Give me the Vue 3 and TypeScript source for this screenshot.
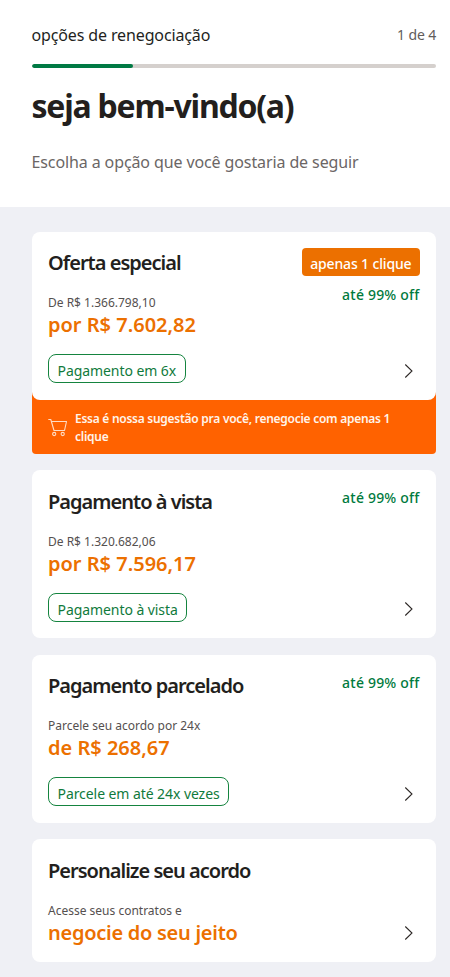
<script setup lang="ts">
interface Offer {
  id: string
  title: string
  caption: string
  price: string
  pill?: string
  badge?: string
  discount?: string
  tip?: string
}

const step = 1
const totalSteps = 4

const offers: Offer[] = [
  {
    id: 'special',
    title: 'Oferta especial',
    caption: 'De R$ 1.366.798,10',
    price: 'por R$ 7.602,82',
    pill: 'Pagamento em 6x',
    badge: 'apenas 1 clique',
    discount: 'até 99% off',
    tip: 'Essa é nossa sugestão pra você, renegocie com apenas 1 clique',
  },
  {
    id: 'cash',
    title: 'Pagamento à vista',
    caption: 'De R$ 1.320.682,06',
    price: 'por R$ 7.596,17',
    pill: 'Pagamento à vista',
    discount: 'até 99% off',
  },
  {
    id: 'installments',
    title: 'Pagamento parcelado',
    caption: 'Parcele seu acordo por 24x',
    price: 'de R$ 268,67',
    pill: 'Parcele em até 24x vezes',
    discount: 'até 99% off',
  },
  {
    id: 'custom',
    title: 'Personalize seu acordo',
    caption: 'Acesse seus contratos e',
    price: 'negocie do seu jeito',
  },
]
</script>

<template>
  <div class="page">
    <header class="header">
      <div class="steps">
        <span class="steps-name">opções de renegociação</span>
        <span class="steps-count">{{ step }} de {{ totalSteps }}</span>
      </div>
      <div class="progress">
        <div class="progress-fill" :style="{ width: (step / totalSteps) * 100 + '%' }"></div>
      </div>
      <h1 class="title">seja bem-vindo(a)</h1>
      <p class="subtitle">Escolha a opção que você gostaria de seguir</p>
    </header>

    <main class="offers">
      <section v-for="offer in offers" :key="offer.id" class="offer" :class="{ tipped: offer.tip }">
        <div class="card">
          <div class="info">
            <h2 class="card-title">{{ offer.title }}</h2>
            <p class="caption">{{ offer.caption }}</p>
            <p class="price" :class="{ words: !offer.pill }">{{ offer.price }}</p>
            <span v-if="offer.pill" class="pill">{{ offer.pill }}</span>
          </div>
          <div class="side">
            <span v-if="offer.badge" class="badge">{{ offer.badge }}</span>
            <span v-if="offer.discount" class="discount">{{ offer.discount }}</span>
            <svg class="chevron" viewBox="0 0 10 16" width="10" height="16">
              <path d="M1.3 1.5 8 8l-6.7 6.5" fill="none" stroke="#2b2624" stroke-width="1.05" />
            </svg>
          </div>
        </div>
        <div v-if="offer.tip" class="tip">
          <svg class="cart" viewBox="0 0 20 20" width="20" height="20" fill="none" stroke="#ffdcc4" stroke-width="1.1">
            <path d="M.3 1.5h2.5l3.2 11h10.5l2-9H3.4" stroke-linejoin="round" />
            <circle cx="6.2" cy="16" r="1.6" />
            <circle cx="14.7" cy="16" r="1.6" />
          </svg>
          <p class="tip-text">{{ offer.tip }}</p>
        </div>
      </section>
    </main>
  </div>
</template>

<style>
body {
  margin: 0;
  background: #eff0f5;
}
</style>

<style scoped>
.page {
  box-sizing: border-box;
  height: 977px;
  overflow: hidden;
  background: #eff0f5;
  font-family: 'Noto Sans', 'Open Sans', sans-serif;
  color: #231f1d;
}
h1,
h2,
p {
  margin: 0;
}
span,
h1,
h2,
.caption,
.price,
.subtitle {
  white-space: nowrap;
}
.header {
  box-sizing: border-box;
  height: 207px;
  padding: 23px 14px 0 31.5px;
  background: #fff;
}
.steps {
  display: flex;
  justify-content: space-between;
  height: 24px;
  line-height: 24px;
}
.steps-name {
  font-size: 16px;
  letter-spacing: -0.13px;
}
.steps-count {
  font-size: 14px;
  letter-spacing: -0.15px;
  color: #625d5b;
}
.progress {
  height: 4px;
  margin-top: 17px;
  border-radius: 2px;
  background: #d5d0cd;
  overflow: hidden;
}
.progress-fill {
  height: 100%;
  border-radius: 2px;
  background: #007a44;
}
.title {
  margin-top: 18px;
  font-size: 32px;
  line-height: 40px;
  font-weight: 700;
  letter-spacing: -1.22px;
}
.subtitle {
  margin-top: 24px;
  font-size: 16px;
  line-height: 24px;
  letter-spacing: -0.11px;
  color: #6b6665;
}
.offers {
  display: flex;
  flex-direction: column;
  gap: 16.5px;
  padding: 25px 14px 0 31.5px;
}
.tipped {
  border-radius: 8px 8px 4px 4px;
  background: linear-gradient(#eff0f5 50%, #ff6200 50%);
}
.card {
  box-sizing: border-box;
  display: flex;
  justify-content: space-between;
  padding: 16px 16.5px 17px;
  border-radius: 8px;
  background: #fff;
}
.info {
  display: flex;
  flex-direction: column;
  align-items: flex-start;
  padding-top: 0.45px;
  margin-bottom: -0.45px;
}
.card-title {
  font-size: 20px;
  line-height: 30px;
  font-weight: 600;
  letter-spacing: -0.98px;
}
.caption {
  margin-top: 16px;
  font-size: 12px;
  line-height: 18px;
  color: #55504f;
}
.price {
  font-size: 20px;
  line-height: 26px;
  font-weight: 600;
  color: #ec7000;
}
.price.words {
  letter-spacing: -0.27px;
}
.pill {
  box-sizing: border-box;
  height: 29px;
  margin-top: 16px;
  padding: 2px 8.5px 0;
  border: 1px solid #15843f;
  border-radius: 8px;
  font-size: 14px;
  line-height: 28px;
  letter-spacing: -0.07px;
  color: #107a3c;
}
.side {
  display: flex;
  flex-direction: column;
  align-items: flex-end;
}
.badge {
  box-sizing: border-box;
  height: 28px;
  margin-bottom: 7px;
  padding: 2px 8px 0;
  border-radius: 4px;
  background: #ec7000;
  color: #fff;
  font-size: 14px;
  line-height: 28px;
  font-weight: 500;
  letter-spacing: -0.15px;
}
.discount {
  font-size: 14px;
  line-height: 24px;
  font-weight: 500;
  letter-spacing: 0.2px;
  color: #007a3d;
}
.chevron {
  margin: auto 6px 4px 0;
}
.tip {
  box-sizing: border-box;
  display: flex;
  align-items: center;
  gap: 7px;
  height: 53.6px;
  padding: 2px 40px 0 16.5px;
}
.cart {
  flex: none;
}
.tip-text {
  font-size: 12px;
  line-height: 18px;
  font-weight: 600;
  letter-spacing: -0.27px;
  color: #fff4ea;
}
</style>
